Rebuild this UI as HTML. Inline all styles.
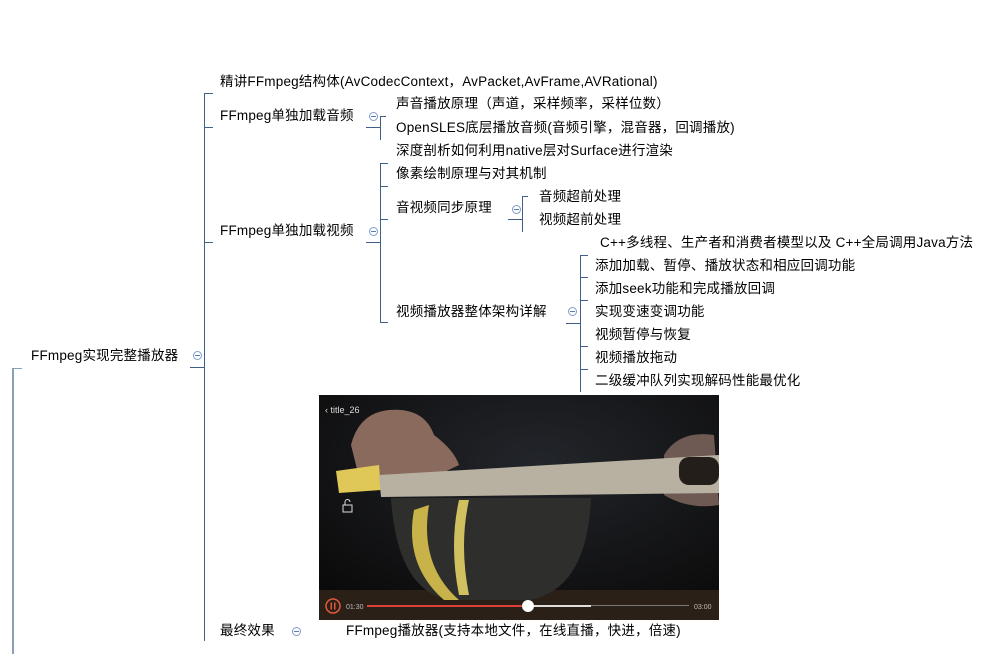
<!DOCTYPE html>
<html><head><meta charset="utf-8"><style>
body{margin:0;background:#fff;width:999px;height:654px;overflow:hidden;position:relative;font-family:"Liberation Sans","Noto Sans CJK SC",sans-serif;font-size:13.5px;color:#000}
.t{position:absolute;white-space:nowrap;line-height:16px;letter-spacing:0.2px}
.l{position:absolute;background:#3f5f8a}
.c{position:absolute;width:9px;height:9px;border:1px solid #7f9ccc;border-radius:50%;box-sizing:border-box}
.c:after{content:"";position:absolute;left:1px;right:1px;top:3px;height:1px;background:#5a7ab8}
</style></head><body>
<div class="l" style="left:12px;top:368px;width:2px;height:286px;background:#8aa0b8"></div>
<div class="l" style="left:12px;top:368px;width:10px;height:1px;background:#8aa0b8"></div>
<div class="t" style="left:31px;top:348px">FFmpeg实现完整播放器</div>
<div class="c" style="left:193px;top:351px"></div>
<div class="l" style="left:190px;top:367px;width:14px;height:1px"></div>
<div class="l" style="left:204px;top:93px;width:1px;height:548px"></div>
<div class="l" style="left:204px;top:93px;width:9px;height:1px"></div>
<div class="l" style="left:204px;top:127px;width:9px;height:1px"></div>
<div class="l" style="left:204px;top:242px;width:9px;height:1px"></div>

<div class="t" style="left:220px;top:74px">精讲FFmpeg结构体(AvCodecContext，AvPacket,AvFrame,AVRational)</div>
<div class="t" style="left:220px;top:108px">FFmpeg单独加载音频</div>
<div class="c" style="left:369px;top:112px"></div>
<div class="l" style="left:366px;top:127px;width:14px;height:1px"></div>
<div class="l" style="left:380px;top:116px;width:1px;height:24px"></div>
<div class="l" style="left:380px;top:116px;width:6px;height:1px"></div>
<div class="t" style="left:396px;top:96px">声音播放原理（声道，采样频率，采样位数）</div>
<div class="t" style="left:396px;top:120px">OpenSLES底层播放音频(音频引擎，混音器，回调播放)</div>
<div class="t" style="left:396px;top:143px">深度剖析如何利用native层对Surface进行渲染</div>

<div class="t" style="left:220px;top:223px">FFmpeg单独加载视频</div>
<div class="c" style="left:369px;top:227px"></div>
<div class="l" style="left:366px;top:242px;width:14px;height:1px"></div>
<div class="l" style="left:380px;top:163px;width:1px;height:160px"></div>
<div class="l" style="left:380px;top:163px;width:8px;height:1px"></div>
<div class="l" style="left:380px;top:186px;width:8px;height:1px"></div>
<div class="l" style="left:380px;top:219px;width:8px;height:1px"></div>
<div class="l" style="left:380px;top:322px;width:8px;height:1px"></div>
<div class="t" style="left:396px;top:166px">像素绘制原理与对其机制</div>
<div class="t" style="left:396px;top:200px">音视频同步原理</div>
<div class="c" style="left:512px;top:205px"></div>
<div class="l" style="left:508px;top:219px;width:14px;height:1px"></div>
<div class="l" style="left:522px;top:196px;width:1px;height:36px"></div>
<div class="l" style="left:522px;top:196px;width:6px;height:1px"></div>
<div class="t" style="left:539px;top:189px">音频超前处理</div>
<div class="t" style="left:539px;top:212px">视频超前处理</div>

<div class="t" style="left:396px;top:304px">视频播放器整体架构详解</div>
<div class="c" style="left:568px;top:307px"></div>
<div class="l" style="left:566px;top:323px;width:14px;height:1px"></div>
<div class="l" style="left:580px;top:255px;width:1px;height:137px"></div>
<div class="l" style="left:580px;top:255px;width:8px;height:1px"></div>
<div class="l" style="left:580px;top:277px;width:8px;height:1px"></div>
<div class="l" style="left:580px;top:300px;width:8px;height:1px"></div>
<div class="l" style="left:580px;top:346px;width:8px;height:1px"></div>
<div class="l" style="left:580px;top:369px;width:8px;height:1px"></div>
<div class="t" style="left:600px;top:235px">C++多线程、生产者和消费者模型以及 C++全局调用Java方法</div>
<div class="t" style="left:595px;top:258px">添加加载、暂停、播放状态和相应回调功能</div>
<div class="t" style="left:595px;top:281px">添加seek功能和完成播放回调</div>
<div class="t" style="left:595px;top:304px">实现变速变调功能</div>
<div class="t" style="left:595px;top:327px">视频暂停与恢复</div>
<div class="t" style="left:595px;top:350px">视频播放拖动</div>
<div class="t" style="left:595px;top:373px">二级缓冲队列实现解码性能最优化</div>

<div class="t" style="left:220px;top:623px">最终效果</div>
<div class="c" style="left:292px;top:627px"></div>
<div class="t" style="left:346px;top:623px">FFmpeg播放器(支持本地文件，在线直播，快进，倍速)</div>

<svg style="position:absolute;left:319px;top:395px" width="400" height="225" viewBox="0 0 400 225">
<defs><radialGradient id="bg" cx="0.55" cy="0.3" r="0.8"><stop offset="0" stop-color="#22252a"/><stop offset="1" stop-color="#0a0909"/></radialGradient></defs>
<rect width="400" height="225" fill="url(#bg)"/>
<rect y="195" width="400" height="30" fill="#2a2018"/>
<path d="M32 50 Q40 18 70 15 Q105 12 115 40 Q135 55 140 70 L115 82 L40 82 Z" fill="#8a6a5c"/>
<path d="M345 60 Q360 35 395 40 L400 110 Q370 115 345 100 Z" fill="#6e5a52"/>
<path d="M72 103 L272 103 Q268 195 210 205 L130 205 Q78 195 72 103 Z" fill="#2e2e2c"/>
<path d="M110 110 Q100 170 140 205 L125 205 Q85 170 95 115 Z" fill="#c8b24a"/>
<path d="M150 105 Q140 150 150 200 L140 200 Q130 150 140 105 Z" fill="#d0c060"/>
<polygon points="17,76 60,70 62,95 20,98" fill="#e0c858"/>
<polygon points="60,80 400,60 400,98 62,102" fill="#b8b0a0"/>
<rect x="360" y="62" width="40" height="28" rx="10" fill="#241e1a"/>
<text x="6" y="18" fill="#ddd" font-size="9" font-family="Liberation Sans">‹  title_26</text>
<rect x="24" y="110" width="9" height="7" fill="none" stroke="#ddd" stroke-width="1"/>
<path d="M26 110 V107 A2.5 2.5 0 0 1 31 107" fill="none" stroke="#ddd"/>
<circle cx="14" cy="211" r="7" fill="none" stroke="#e05a3a" stroke-width="1.5"/>
<rect x="11.5" y="207.5" width="1.5" height="7" fill="#e05a3a"/><rect x="15" y="207.5" width="1.5" height="7" fill="#e05a3a"/>
<text x="27" y="214" fill="#bbb" font-size="7">01:30</text>
<text x="375" y="214" fill="#bbb" font-size="7">03:00</text>
<rect x="48" y="210" width="161" height="2" fill="#e0403a"/>
<rect x="209" y="210" width="63" height="2" fill="#ddd"/>
<rect x="272" y="210" width="98" height="1" fill="#777"/>
<circle cx="209" cy="211" r="6" fill="#fff"/>
</svg>
</body></html>
